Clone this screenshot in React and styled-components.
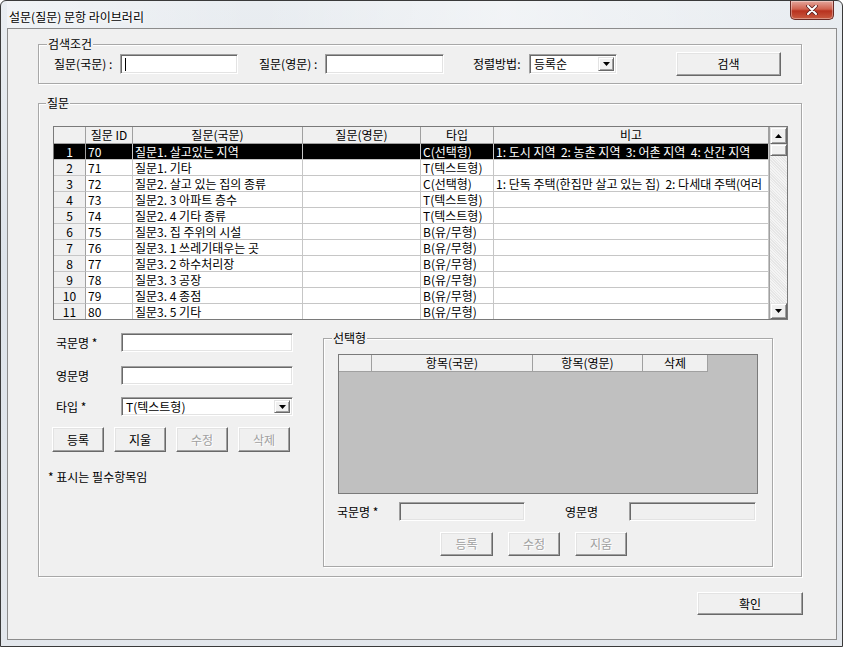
import React from "react";
import styled, { createGlobalStyle } from "styled-components";

const GlobalStyle = createGlobalStyle`
  html, body { margin: 0; padding: 0; background: #fff; }
  body {
    font-family: "Noto Sans CJK KR", "Noto Sans", sans-serif;
    font-size: 12px;
    line-height: 14px;
    color: #000;
  }
`;

const rows = [
  ["70", "질문1. 살고있는 지역", "", "C(선택형)", "1: 도시 지역  2: 농촌 지역  3: 어촌 지역  4: 산간 지역"],
  ["71", "질문1. 기타", "", "T(텍스트형)", ""],
  ["72", "질문2. 살고 있는 집의 종류", "", "C(선택형)", "1: 단독 주택(한집만 살고 있는 집)  2: 다세대 주택(여러"],
  ["73", "질문2. 3 아파트 층수", "", "T(텍스트형)", ""],
  ["74", "질문2. 4 기타 종류", "", "T(텍스트형)", ""],
  ["75", "질문3. 집 주위의 시설", "", "B(유/무형)", ""],
  ["76", "질문3. 1 쓰레기태우는 곳", "", "B(유/무형)", ""],
  ["77", "질문3. 2 하수처리장", "", "B(유/무형)", ""],
  ["78", "질문3. 3 공장", "", "B(유/무형)", ""],
  ["79", "질문3. 4 종점", "", "B(유/무형)", ""],
  ["80", "질문3. 5 기타", "", "B(유/무형)", ""],
];

const headers = ["", "질문 ID", "질문(국문)", "질문(영문)", "타입", "비고"];

function Arrow({ up }) {
  return (
    <svg width="7" height="4" viewBox="0 0 7 4">
      <path d={up ? "M0 4 L3.5 0 L7 4 Z" : "M0 0 L7 0 L3.5 4 Z"} fill="#000" />
    </svg>
  );
}

function App() {
  return (
    <>
      <GlobalStyle />
      <Window>
        <TitleBar>
          <Title>설문(질문) 문항 라이브러리</Title>
          <CloseButton>
            <svg width="12" height="10" viewBox="0 0 12 10">
              <path d="M2 1 L10 9 M10 1 L2 9" stroke="#5a2020" strokeWidth="3.6" strokeLinecap="round" />
              <path d="M2 1 L10 9 M10 1 L2 9" stroke="#fff" strokeWidth="2" strokeLinecap="round" />
            </svg>
          </CloseButton>
        </TitleBar>
        <Client>
          <GroupBox $w={764} $h={40} $mt={15}>
            <Legend $x={8}>검색조건</Legend>
            <SearchRow>
              <Label $w={66}>질문(국문) :</Label>
              <Field $w={118} $h={20}>
                <Caret />
              </Field>
              <Label $w={66} $ml={21}>질문(영문) :</Label>
              <Field $w={119} $h={20} />
              <Label $w={56} $ml={29}>정렬방법:</Label>
              <Field $w={88} $h={20}>
                <SelectText>등록순</SelectText>
                <DropButton>
                  <Arrow />
                </DropButton>
              </Field>
              <Button $w={105} $h={24} $ml={59}>검색</Button>
            </SearchRow>
          </GroupBox>

          <GroupBox $w={764} $h={474} $mt={19}>
            <Legend $x={7}>질문</Legend>
            <GroupBody>
              <Grid>
                <Table>
                  {headers.map((h, i) => (
                    <HeadCell key={i}>{h}</HeadCell>
                  ))}
                  {rows.map((r, i) => (
                    <React.Fragment key={i}>
                      <RowHead $sel={i === 0}>{i + 1}</RowHead>
                      {r.map((c, j) => (
                        <Cell key={j} $sel={i === 0}>
                          {c}
                        </Cell>
                      ))}
                    </React.Fragment>
                  ))}
                </Table>
                <ScrollBar>
                  <ScrollButton $h={17}>
                    <Arrow up />
                  </ScrollButton>
                  <ScrollButton $h={12} />
                  <Track />
                  <ScrollButton $h={16}>
                    <Arrow />
                  </ScrollButton>
                </ScrollBar>
              </Grid>

              <Lower>
                <LeftForm>
                  <FormRow $mt={13}>
                    <FormLabel>국문명 *</FormLabel>
                    <Field $w={172} $h={19} />
                  </FormRow>
                  <FormRow $mt={14}>
                    <FormLabel>영문명</FormLabel>
                    <Field $w={172} $h={19} />
                  </FormRow>
                  <FormRow $mt={12}>
                    <FormLabel>타입 *</FormLabel>
                    <Field $w={172} $h={19}>
                      <SelectText>T(텍스트형)</SelectText>
                      <DropButton>
                        <Arrow />
                      </DropButton>
                    </Field>
                  </FormRow>
                  <ButtonRow $mt={11} $pl={4} $gap={10}>
                    <Button $w={52} $h={25}>등록</Button>
                    <Button $w={52} $h={25}>지울</Button>
                    <Button $w={52} $h={25} disabled>수정</Button>
                    <Button $w={52} $h={25} disabled>삭제</Button>
                  </ButtonRow>
                  <Note>* 표시는 필수항목임</Note>
                </LeftForm>

                <GroupBox $w={450} $h={229} $mt={18}>
                  <Legend $x={8}>선택형</Legend>
                  <ChoiceBody>
                    <SubGrid>
                      <SubHead $w={33} />
                      <SubHead $w={161}>항목(국문)</SubHead>
                      <SubHead $w={110}>항목(영문)</SubHead>
                      <SubHead $w={65}>삭제</SubHead>
                    </SubGrid>
                    <ChoiceRow>
                      <Label $w={62}>국문명 *</Label>
                      <Field $w={126} $h={19} $disabled />
                      <Label $w={64} $ml={40}>영문명</Label>
                      <Field $w={127} $h={19} $disabled />
                    </ChoiceRow>
                    <ButtonRow $mt={11} $pl={102} $gap={15}>
                      <Button $w={53} $h={24} disabled>등록</Button>
                      <Button $w={52} $h={24} disabled>수정</Button>
                      <Button $w={52} $h={24} disabled>지움</Button>
                    </ButtonRow>
                  </ChoiceBody>
                </GroupBox>
              </Lower>
            </GroupBody>
          </GroupBox>

          <Footer>
            <Button $w={106} $h={23}>확인</Button>
          </Footer>
        </Client>
      </Window>
    </>
  );
}

export default App;

const Window = styled.div`
  width: 843px;
  height: 647px;
  box-sizing: border-box;
  border: 1px solid #3a3a3a;
  border-radius: 6px 6px 0 0;
  background: linear-gradient(180deg, #e9edf1 0%, #dde3ea 40%, #e3e7ec 100%);
  padding: 0 5px 6px 6px;
  display: flex;
  flex-direction: column;
  overflow: hidden;
`;

const TitleBar = styled.div`
  height: 27px;
  display: flex;
  align-items: flex-start;
  padding-left: 2px;
  background: linear-gradient(90deg, rgba(255,255,255,0.35), rgba(255,255,255,0) 30%, rgba(255,255,255,0.4) 60%, rgba(255,255,255,0));
`;

const Title = styled.div`
  margin-top: 8px;
  font-size: 12px;
  line-height: 16px;
  color: #000;
  text-shadow: 0 0 6px #fff, 0 0 3px #fff;
`;

const CloseButton = styled.div`
  margin-left: auto;
  margin-right: 3px;
  width: 44px;
  height: 19px;
  box-sizing: border-box;
  border: 1px solid #6b2a24;
  border-top: none;
  border-radius: 0 0 5px 5px;
  background: linear-gradient(180deg, #e4a69c 0%, #d0624f 45%, #b8321f 55%, #c95a40 100%);
  box-shadow: inset 0 0 0 1px rgba(255, 255, 255, 0.35);
  display: flex;
  align-items: center;
  justify-content: center;
`;

const Client = styled.div`
  flex: 1;
  border: 1px solid #8c8c8c;
  background: #f0f0f0;
  display: flex;
  flex-direction: column;
  padding-left: 30px;
`;

const GroupBox = styled.div`
  position: relative;
  box-sizing: border-box;
  width: ${(p) => p.$w}px;
  height: ${(p) => p.$h}px;
  margin-top: ${(p) => p.$mt || 0}px;
  flex-shrink: 0;
  border: 1px solid #a8a8a8;
  box-shadow: inset 1px 1px 0 #fff, 1px 1px 0 #fff;
`;

const Legend = styled.span`
  position: absolute;
  top: -8px;
  left: ${(p) => p.$x}px;
  padding: 0 1px;
  background: #f0f0f0;
  line-height: 14px;
`;

const SearchRow = styled.div`
  display: flex;
  align-items: center;
  padding: 7px 0 0 15px;
`;

const Label = styled.div`
  width: ${(p) => p.$w}px;
  margin-left: ${(p) => p.$ml || 0}px;
  flex-shrink: 0;
  white-space: nowrap;
`;

const Field = styled.div`
  box-sizing: border-box;
  width: ${(p) => p.$w}px;
  height: ${(p) => p.$h}px;
  flex-shrink: 0;
  display: flex;
  align-items: center;
  background: ${(p) => (p.$disabled ? "#f0f0f0" : "#fff")};
  border-style: solid;
  border-width: 1px;
  border-color: #a0a0a0 #fff #fff #a0a0a0;
  box-shadow: inset 1px 1px 0 #696969, inset -1px -1px 0 #e3e3e3;
  padding: 2px;
`;

const Caret = styled.span`
  width: 1px;
  height: 13px;
  margin-left: 2px;
  background: #000;
`;

const SelectText = styled.span`
  flex: 1;
  padding-left: 2px;
  white-space: nowrap;
`;

const DropButton = styled.div`
  box-sizing: border-box;
  width: 16px;
  height: 100%;
  display: flex;
  align-items: center;
  justify-content: center;
  background: #f0f0f0;
  border-style: solid;
  border-width: 1px;
  border-color: #e3e3e3 #696969 #696969 #e3e3e3;
  box-shadow: inset 1px 1px 0 #fff, inset -1px -1px 0 #a0a0a0;
`;

const Button = styled.button`
  box-sizing: border-box;
  width: ${(p) => p.$w}px;
  height: ${(p) => p.$h}px;
  margin-left: ${(p) => p.$ml || 0}px;
  flex-shrink: 0;
  padding: 0;
  font: inherit;
  display: flex;
  align-items: center;
  justify-content: center;
  background: #f0f0f0;
  border-style: solid;
  border-width: 1px;
  border-color: #fff #696969 #696969 #fff;
  box-shadow: inset -1px -1px 0 #a0a0a0, inset 1px 1px 0 #e3e3e3;
  color: #000;
  &:disabled {
    color: #a0a0a0;
    text-shadow: 1px 1px 0 #fff;
  }
`;

const GroupBody = styled.div`
  display: flex;
  flex-direction: column;
  padding: 22px 0 0 9px;
`;

const Grid = styled.div`
  margin-left: 5px;
  width: 735px;
  height: 194px;
  box-sizing: border-box;
  border: 1px solid #7a7a7a;
  display: flex;
  background: #fff;
  overflow: hidden;
`;

const Table = styled.div`
  display: grid;
  grid-template-columns: 32px 47px 170px 118px 73px 275px;
  grid-template-rows: 17px;
  grid-auto-rows: 16px;
`;

const HeadCell = styled.div`
  box-sizing: border-box;
  background: #f0f0f0;
  border-right: 1px solid #a0a0a0;
  border-bottom: 1px solid #a0a0a0;
  text-align: center;
  line-height: 16px;
  white-space: nowrap;
  overflow: hidden;
`;

const Cell = styled.div`
  box-sizing: border-box;
  background: ${(p) => (p.$sel ? "#000" : "#fff")};
  color: ${(p) => (p.$sel ? "#fff" : "#000")};
  border-right: 1px solid #c6c6c6;
  border-bottom: 1px solid #c6c6c6;
  padding-left: 2px;
  line-height: 15px;
  white-space: pre;
  overflow: hidden;
`;

const RowHead = styled(Cell)`
  background: ${(p) => (p.$sel ? "#000" : "#f0f0f0")};
  border-right-color: #a0a0a0;
  text-align: center;
  padding-left: 0;
`;

const ScrollBar = styled.div`
  width: 18px;
  display: flex;
  flex-direction: column;
  border-left: 1px solid #a0a0a0;
  background: #eaeaea;
`;

const ScrollButton = styled.div`
  box-sizing: border-box;
  height: ${(p) => p.$h}px;
  display: flex;
  align-items: center;
  justify-content: center;
  background: #f0f0f0;
  border-style: solid;
  border-width: 1px;
  border-color: #e3e3e3 #696969 #696969 #e3e3e3;
  box-shadow: inset 1px 1px 0 #fff, inset -1px -1px 0 #a0a0a0;
`;

const Track = styled.div`
  flex: 1;
  background: repeating-linear-gradient(45deg, #f4f4f4 0 1px, #e6e6e6 1px 2px);
`;

const Lower = styled.div`
  display: flex;
  align-items: flex-start;
`;

const LeftForm = styled.div`
  width: 275px;
  display: flex;
  flex-direction: column;
`;

const FormRow = styled.div`
  display: flex;
  align-items: center;
  margin-top: ${(p) => p.$mt}px;
`;

const FormLabel = styled.div`
  box-sizing: border-box;
  width: 73px;
  padding-left: 8px;
  white-space: nowrap;
`;

const ButtonRow = styled.div`
  display: flex;
  margin-top: ${(p) => p.$mt}px;
  padding-left: ${(p) => p.$pl}px;
  gap: ${(p) => p.$gap}px;
`;

const Note = styled.div`
  margin-top: 18px;
  white-space: nowrap;
`;

const ChoiceBody = styled.div`
  display: flex;
  flex-direction: column;
  padding: 15px 0 0 14px;
`;

const SubGrid = styled.div`
  width: 420px;
  height: 140px;
  box-sizing: border-box;
  border: 1px solid #7a7a7a;
  background: #c0c0c0;
  display: flex;
  align-items: flex-start;
`;

const SubHead = styled.div`
  box-sizing: border-box;
  width: ${(p) => p.$w}px;
  height: 17px;
  background: #f0f0f0;
  border-right: 1px solid #a0a0a0;
  border-bottom: 1px solid #a0a0a0;
  text-align: center;
  line-height: 16px;
`;

const ChoiceRow = styled.div`
  display: flex;
  align-items: center;
  margin-top: 8px;
  padding-left: 13px;
  margin-left: -14px;
`;

const Footer = styled.div`
  display: flex;
  justify-content: flex-end;
  width: 765px;
  margin-top: 15px;
`;
